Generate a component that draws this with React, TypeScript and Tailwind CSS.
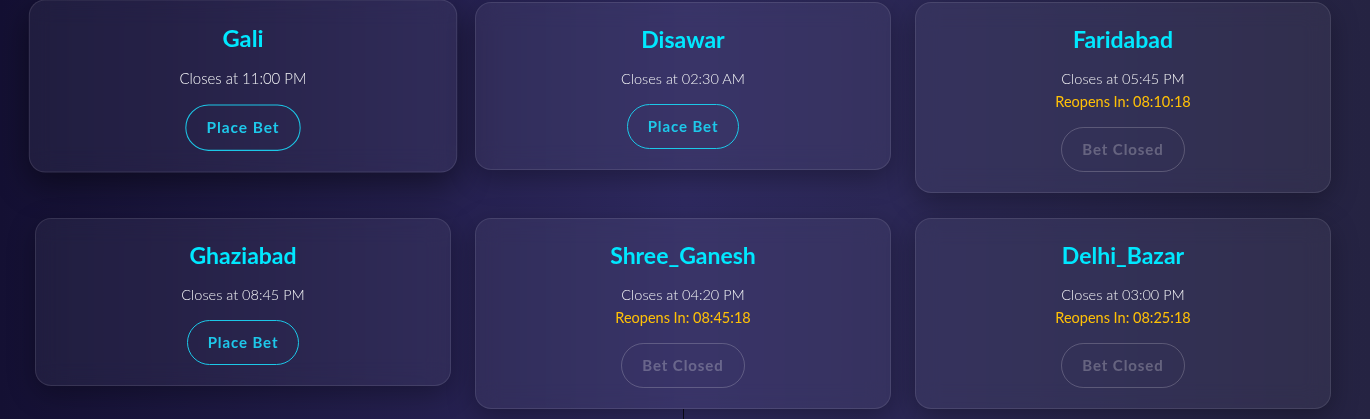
import React from "react";

type Market = {
  name: string;
  closes: string;
  reopens?: string;
  open: boolean;
  hovered?: boolean;
};

const markets: Market[] = [
  { name: "Gali", closes: "11:00 PM", open: true, hovered: true },
  { name: "Disawar", closes: "02:30 AM", open: true },
  { name: "Faridabad", closes: "05:45 PM", reopens: "08:10:18", open: false },
  { name: "Ghaziabad", closes: "08:45 PM", open: true },
  { name: "Shree_Ganesh", closes: "04:20 PM", reopens: "08:45:18", open: false },
  { name: "Delhi_Bazar", closes: "03:00 PM", reopens: "08:25:18", open: false },
];

function Card({ m }: { m: Market }) {
  return (
    <div
      className={
        "flex flex-col items-center text-center rounded-2xl border border-white/10 bg-white/[0.05] backdrop-blur-md px-6 pt-5 pb-5 " +
        (m.hovered
          ? "scale-[1.03] shadow-[0_12px_32px_rgba(0,0,0,0.45)]"
          : "shadow-[0_8px_28px_rgba(0,0,0,0.3)]")
      }
    >
      <h3 className="text-[23px] leading-8 font-bold text-[#00e8ff]">
        {m.name}
      </h3>
      <p className="mt-3 text-[14.5px] leading-[23px] font-light text-gray-100">
        Closes at {m.closes}
      </p>
      {m.reopens && (
        <p className="text-[14.5px] leading-[23px] text-[#ffc107]">
          Reopens In: {m.reopens}
        </p>
      )}
      {m.open ? (
        <button className="mt-[14px] h-[45px] px-5 rounded-full border border-[#1cc8e8] text-[#1ec8ea] text-[15px] font-bold tracking-[0.06em]">
          Place Bet
        </button>
      ) : (
        <button className="mt-[14px] h-[45px] px-5 rounded-full border border-white/20 text-white/25 text-[15px] font-bold tracking-[0.06em]">
          Bet Closed
        </button>
      )}
    </div>
  );
}

export default function App() {
  return (
    <div className="min-h-[419px] w-full overflow-hidden bg-gradient-to-r from-[#141033] via-[#2f2a60] to-[#252342] font-['Lato',sans-serif]">
      <div className="grid grid-cols-3 items-start gap-x-6 gap-y-[25px] pl-[35px] pr-[39px] pt-[2px]">
        {markets.map((m, i) => (
          <div key={m.name} className="flex flex-col items-center">
            <div className="w-full">
              <Card m={m} />
            </div>
            {i === 4 && <div className="w-px h-4 bg-[#0b0a18]" />}
          </div>
        ))}
      </div>
    </div>
  );
}
